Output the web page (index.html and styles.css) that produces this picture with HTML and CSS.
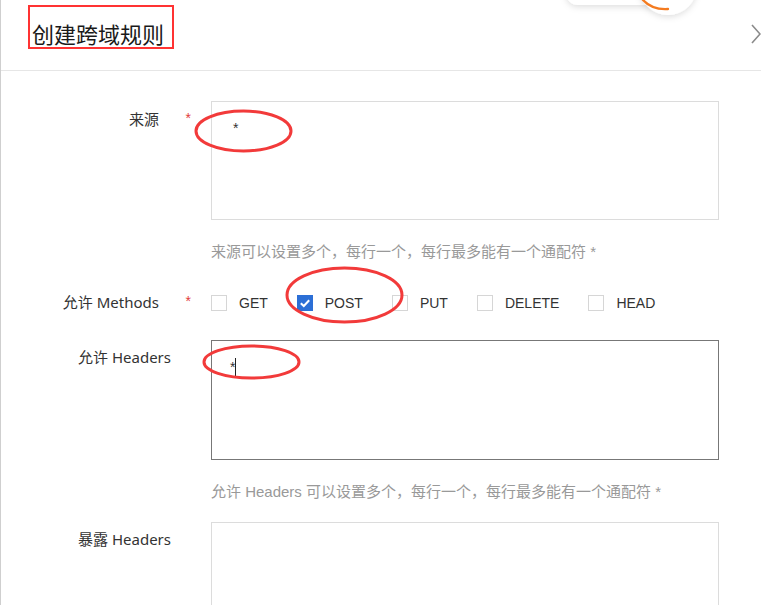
FILE: index.html
```html
<!DOCTYPE html>
<html lang="zh-CN">
<head>
<meta charset="utf-8">
<title>创建跨域规则</title>
<link rel="stylesheet" href="styles.css">
</head>
<body>
<div class="panel">
  <header class="header">
    <h1 class="title">创建跨域规则</h1>
    <svg class="chevron" width="10" height="20" viewBox="0 0 10 20"><polyline points="1,1 9,10 1,19" fill="none" stroke="#8a8a8a" stroke-width="1.6"/></svg>
  </header>

  <form class="form">
    <div class="field field-first">
      <div class="label required"><span>来源</span><span class="req">*</span></div>
      <div class="control">
        <div class="textarea">*</div>
        <div class="help">来源可以设置多个，每行一个，每行最多能有一个通配符 *</div>
      </div>
    </div>

    <div class="field field-methods">
      <div class="label required label-inline"><span>允许 Methods</span><span class="req">*</span></div>
      <div class="control checks">
        <label class="check"><span class="box"></span><span>GET</span></label>
        <label class="check"><span class="box checked"><svg width="16" height="16" viewBox="0 0 16 16"><polyline points="3.8,8.2 6.8,11 12.2,5.2" fill="none" stroke="#fff" stroke-width="2"/></svg></span><span>POST</span></label>
        <label class="check"><span class="box"></span><span>PUT</span></label>
        <label class="check"><span class="box"></span><span>DELETE</span></label>
        <label class="check"><span class="box"></span><span>HEAD</span></label>
      </div>
    </div>

    <div class="field field-headers">
      <div class="label"><span>允许 Headers</span></div>
      <div class="control">
        <div class="textarea focused">*<span class="caret"></span></div>
        <div class="help">允许 Headers 可以设置多个，每行一个，每行最多能有一个通配符 *</div>
      </div>
    </div>

    <div class="field field-expose">
      <div class="label"><span>暴露 Headers</span></div>
      <div class="control">
        <div class="textarea"></div>
      </div>
    </div>
  </form>
</div>

<svg class="overlay" width="761" height="605" viewBox="0 0 761 605">
  <defs>
    <filter id="sh" x="-30%" y="-60%" width="160%" height="220%">
      <feDropShadow dx="0" dy="2" stdDeviation="3" flood-color="#000" flood-opacity="0.13"/>
    </filter>
  </defs>
  <rect x="566" y="-40" width="100" height="45" rx="12" fill="#fff" filter="url(#sh)"/>
  <circle cx="668" cy="-14" r="29" fill="#fff" filter="url(#sh)"/>
  <path d="M643 0 Q652 10 668 9" fill="none" stroke="#f47b20" stroke-width="2.4" stroke-linecap="round"/>
  <ellipse cx="243.5" cy="131" rx="47.5" ry="20" fill="none" stroke="#f23a3a" stroke-width="3"/>
  <ellipse cx="344.5" cy="295" rx="57.5" ry="27" fill="none" stroke="#f23a3a" stroke-width="3"/>
  <ellipse cx="251.5" cy="362" rx="47.5" ry="16" fill="none" stroke="#f23a3a" stroke-width="3"/>
</svg>
</body>
</html>
```

FILE: styles.css
```css
* { box-sizing: border-box; }

html, body {
  margin: 0;
  padding: 0;
  background: #fff;
}

body {
  width: 761px;
  height: 605px;
  overflow: hidden;
  position: relative;
  font-family: "Liberation Sans", "Noto Sans CJK SC", sans-serif;
  color: #333;
}

.panel {
  border-left: 1px solid #cfcfcf;
  min-height: 605px;
}

.header {
  height: 71px;
  border-bottom: 1px solid #e6e6e6;
  display: flex;
  justify-content: space-between;
  align-items: flex-start;
  padding-left: 27px;
}

.title {
  margin: 5px 0 0 0;
  padding: 13px 8px 1px 2px;
  border: 2px solid #f33;
  font-size: 22px;
  line-height: 26px;
  font-weight: normal;
  color: #1a1a1a;
  font-family: "Noto Sans CJK SC", sans-serif;
}

.chevron {
  margin-top: 24px;
}

.form {
  padding-top: 30px;
}

.field {
  display: grid;
  grid-template-columns: 210px 508px;
}

.label {
  font-family: "Noto Sans", "Noto Sans CJK SC", sans-serif;
  font-size: 15px;
  line-height: 22px;
  padding-top: 6px;
  padding-right: 40px;
  text-align: right;
  color: #333;
  white-space: nowrap;
}

.label.required {
  padding-right: 20px;
}

.req {
  display: inline-block;
  margin-left: 26px;
  width: 6px;
  color: #e23b3b;
  font-family: "Liberation Sans", sans-serif;
  font-size: 14px;
  vertical-align: 2px;
}

.textarea {
  height: 119px;
  border: 1px solid #dcdcdc;
  padding: 16px 21px;
  font-size: 14px;
  line-height: 20px;
  color: #333;
}

.textarea.focused {
  border-color: #777;
  height: 120px;
  padding-left: 18px;
}

.caret {
  display: inline-block;
  width: 1px;
  height: 19px;
  background: #222;
  vertical-align: -5px;
}

.help {
  margin-top: 22px;
  font-size: 15px;
  line-height: 20px;
  color: #999;
}

.field-methods {
  margin-top: 30px;
  grid-template-rows: 22px;
  height: 22px;
}

.label-inline {
  padding-top: 0;
  line-height: 18px;
}

.checks {
  display: flex;
  align-items: center;
  gap: 29px;
  height: 22px;
}

.check {
  display: flex;
  align-items: center;
  gap: 12px;
  font-size: 14px;
  color: #333;
}

.box {
  width: 16px;
  height: 16px;
  border: 1px solid #d6d6d6;
  background: #fff;
  display: block;
}

.box.checked {
  border: none;
  background: #2c6fd6;
}

.box.checked svg {
  display: block;
}

.field-headers {
  margin-top: 26px;
}

.field-expose {
  margin-top: 20px;
}

.overlay {
  position: absolute;
  left: 0;
  top: 0;
  pointer-events: none;
}
```
